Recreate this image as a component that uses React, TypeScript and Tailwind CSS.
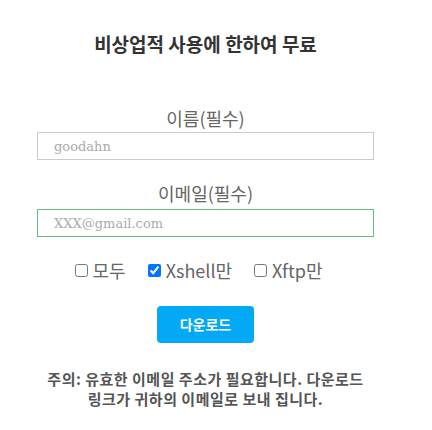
import { useEffect, useRef, useState } from "react";

const ko = "font-['Noto_Sans_CJK_KR','Malgun_Gothic',sans-serif]";

export default function App() {
  const [name, setName] = useState("goodahn");
  const [email, setEmail] = useState("XXX@gmail.com");
  const [pick, setPick] = useState<"all" | "xshell" | "xftp">("xshell");
  const emailRef = useRef<HTMLInputElement>(null);

  useEffect(() => {
    const el = emailRef.current;
    if (!el) return;
    el.focus();
    el.setSelectionRange(el.value.length, el.value.length);
  }, []);

  const opts: { key: "all" | "xshell" | "xftp"; label: string }[] = [
    { key: "all", label: "모두" },
    { key: "xshell", label: "Xshell만" },
    { key: "xftp", label: "Xftp만" },
  ];

  return (
    <div className={`w-[411px] bg-white ${ko}`}>
      <h2 className="pt-[31px] text-center text-[19px] font-bold leading-[26px] text-[#333]">
        비상업적 사용에 한하여 무료
      </h2>

      <label className="mt-[49px] block text-center text-[18px] leading-[24px] text-[#666]">
        이름(필수)
      </label>
      <div className="mx-[37px] mt-[2px]">
        <input
          value={name}
          onChange={(e) => setName(e.target.value)}
          className="block h-[28px] w-full border border-[#ccc] px-[16px] font-['DejaVu_Serif',serif] text-[13px] text-[#aaa] outline-none"
        />
      </div>

      <label className="mt-[21px] block text-center text-[18px] leading-[24px] text-[#666]">
        이메일(필수)
      </label>
      <div className="mx-[37px] mt-[4px]">
        <input
          ref={emailRef}
          value={email}
          onChange={(e) => setEmail(e.target.value)}
          className="block h-[28px] w-full border border-[#6abb7a] px-[16px] font-['DejaVu_Serif',serif] text-[13px] text-[#aaa] caret-[#333] outline-none"
        />
      </div>

      <div className="mt-[21px] flex items-center justify-center pl-[8px] text-[18px] leading-[24px] text-[#666]">
        {opts.map((o) => (
          <label key={o.key} className="mr-[22px] flex items-center">
            <input
              type="checkbox"
              checked={pick === o.key}
              onChange={() => setPick(o.key)}
              className="m-0 mr-[5px] h-[13px] w-[13px] accent-[#0075ff]"
            />
            {o.label}
          </label>
        ))}
      </div>

      <div className="mt-[24px] flex justify-center">
        <button
          type="button"
          className="h-[37px] w-[97px] rounded-[4px] bg-[#03a9f4] text-[14px] font-bold text-white"
        >
          다운로드
        </button>
      </div>

      <p className="mt-[26px] px-[30px] text-center text-[15px] font-bold leading-[20px] tracking-[0.5px] text-[#555]">
        주의: 유효한 이메일 주소가 필요합니다. 다운로드
        <br />
        링크가 귀하의 이메일로 보내 집니다.
      </p>
    </div>
  );
}
